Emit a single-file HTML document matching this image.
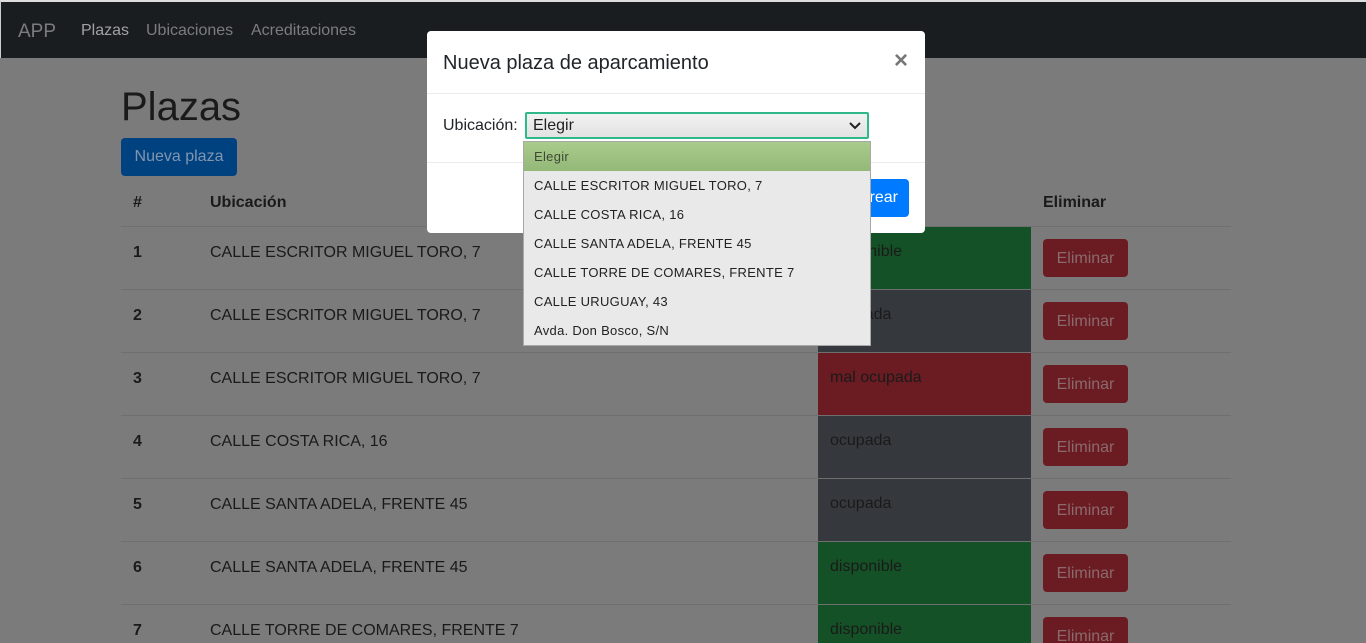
<!DOCTYPE html>
<html style="width:1366px;height:643px;overflow:hidden"><head><meta charset="utf-8"><style>
*{box-sizing:border-box;margin:0;padding:0}
body{width:1366px;height:643px;overflow:hidden;background:#7b7b7b;font-family:"Liberation Sans",sans-serif;position:relative;color:#1a1a1a}
.nav{position:absolute;left:0;top:0;width:1366px;height:58px;background:#1a1d20;border-top:2px solid #ddd;border-left:1px solid #ccc}
.nav span{position:absolute;top:20px;font-size:16px;color:#7b7c7d}
.a{position:absolute}
h1{position:absolute;left:121px;top:85px;font-size:40px;font-weight:400;color:#1a1a1a}
.btn{position:absolute;border-radius:4px;font-size:16px;text-align:center}
.row{position:absolute;left:121px;width:1110px;height:63px;border-top:1px solid #6f6f6f}
.row .n{position:absolute;left:12px;top:17px;font-weight:bold;font-size:16px}
.row .u{position:absolute;left:89px;top:17px;font-size:16px}
.row .s{position:absolute;left:697px;top:0;width:213px;height:62px;padding:16px 12px;font-size:16px}
.row .e{position:absolute;left:922px;top:12px;width:85px;height:38px;background:#6b1c22;border-radius:4px;color:#8a6a6c;font-size:16px;text-align:center;line-height:40px}
.g{background:#155126}.d{background:#35393e}.r{background:#6b1c22}
.modal{position:absolute;left:427px;top:31px;width:498px;height:202px;background:#fff;border-radius:4px}
.dd{position:absolute;left:523px;top:141px;width:348px;height:205px;background:#e9e9e9;border:1px solid #a8a8a8;font-size:13px;color:#222}
.dd div{height:29px;line-height:29px;padding-left:10px;letter-spacing:.3px}
</style></head><body>
<div class="nav"><span style="left:17px;font-size:19px;top:19px">APP</span><span style="left:80px;color:#a0a1a2">Plazas</span><span style="left:145px">Ubicaciones</span><span style="left:250px">Acreditaciones</span></div>
<h1>Plazas</h1>
<div class="btn" style="left:121px;top:138px;width:116px;height:38px;line-height:38px;background:#00417f;color:#8096b0">Nueva plaza</div>
<div class="a" style="left:133px;top:194px;font-weight:bold;font-size:16px">#</div>
<div class="a" style="left:210px;top:194px;font-weight:bold;font-size:16px">Ubicación</div>
<div class="a" style="left:1043px;top:194px;font-weight:bold;font-size:16px">Eliminar</div>
<div class="row" style="top:226px"><span class="n">1</span><span class="u">CALLE ESCRITOR MIGUEL TORO, 7</span><div class="s g">disponible</div><div class="e">Eliminar</div></div>
<div class="row" style="top:289px"><span class="n">2</span><span class="u">CALLE ESCRITOR MIGUEL TORO, 7</span><div class="s d">ocupada</div><div class="e">Eliminar</div></div>
<div class="row" style="top:352px"><span class="n">3</span><span class="u">CALLE ESCRITOR MIGUEL TORO, 7</span><div class="s r">mal ocupada</div><div class="e">Eliminar</div></div>
<div class="row" style="top:415px"><span class="n">4</span><span class="u">CALLE COSTA RICA, 16</span><div class="s d">ocupada</div><div class="e">Eliminar</div></div>
<div class="row" style="top:478px"><span class="n">5</span><span class="u">CALLE SANTA ADELA, FRENTE 45</span><div class="s d">ocupada</div><div class="e">Eliminar</div></div>
<div class="row" style="top:541px"><span class="n">6</span><span class="u">CALLE SANTA ADELA, FRENTE 45</span><div class="s g">disponible</div><div class="e">Eliminar</div></div>
<div class="row" style="top:604px"><span class="n">7</span><span class="u">CALLE TORRE DE COMARES, FRENTE 7</span><div class="s g">disponible</div><div class="e">Eliminar</div></div>
<div class="modal">
<div class="a" style="left:16px;top:21px;font-size:20px;color:#212529">Nueva plaza de aparcamiento</div>
<div class="a" style="left:467px;top:16px;font-size:24px;font-weight:bold;color:#777">×</div>
<div class="a" style="left:0;top:62px;width:498px;border-top:1px solid #e9ecef"></div>
<div class="a" style="left:16px;top:86px;font-size:16px;color:#212529">Ubicación:</div>
<div class="a" style="left:98px;top:81px;width:344px;height:27px;border:2px solid #2fb88a;border-radius:2px;background:linear-gradient(#f2f2f2,#e2e2e2);font-size:16px;padding:3px 6px;color:#222">Elegir
<svg class="a" style="right:6px;top:8px" width="12" height="8" viewBox="0 0 12 8"><path d="M1 1l5 5 5-5" stroke="#222" stroke-width="2" fill="none"/></svg></div>
<div class="a" style="left:0;top:131px;width:498px;border-top:1px solid #e9ecef"></div>
<div class="btn" style="left:420px;top:148px;width:62px;height:38px;line-height:38px;background:#007bff;color:#fff">Crear</div>
</div>
<div class="dd">
<div style="background:linear-gradient(#a9cb8b,#94b878);color:#3d4a33">Elegir</div>
<div>CALLE ESCRITOR MIGUEL TORO, 7</div>
<div>CALLE COSTA RICA, 16</div>
<div>CALLE SANTA ADELA, FRENTE 45</div>
<div>CALLE TORRE DE COMARES, FRENTE 7</div>
<div>CALLE URUGUAY, 43</div>
<div>Avda. Don Bosco, S/N</div>
</div>
</body></html>
